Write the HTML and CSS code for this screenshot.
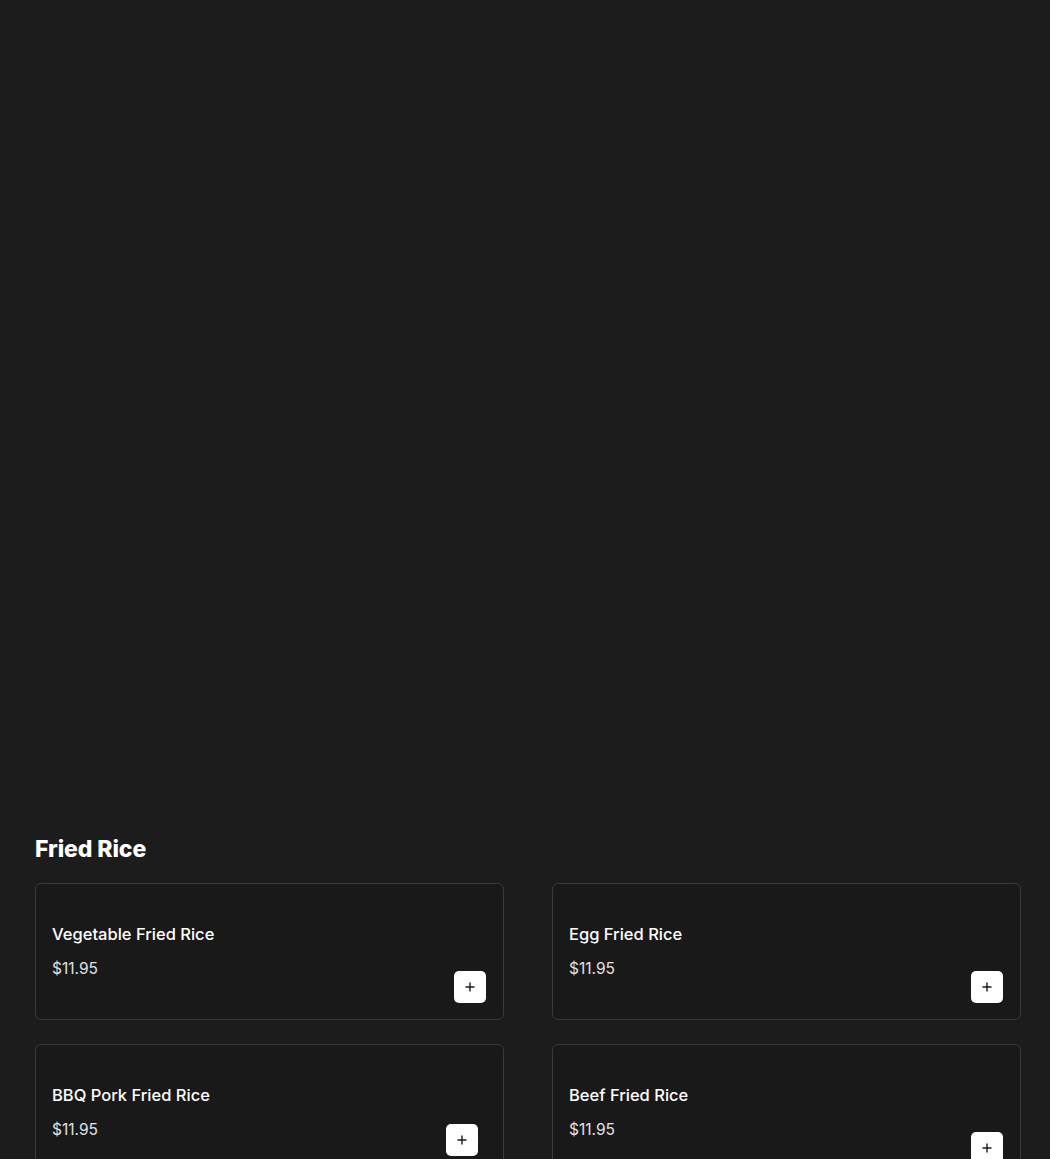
FILE: index.html
```html
<!DOCTYPE html>
<html lang="en">
<head>
    <meta name="viewport" content="width=device-width, initial-scale=1">
    <title>Menu - Fried Rice</title>
    <link rel="stylesheet" href="styles.css">
</head>
<body>

    <!-- Hero banner (image area) -->
    <div class="hero"></div>

    <section class="menu-section">
        <h2 class="section-title">Fried Rice</h2>

        <div class="menu-grid">
            <div class="item-card">
                <div class="item-info">
                    <div class="item-name">Vegetable Fried Rice</div>
                    <div class="item-price">$11.95</div>
                </div>
                <button class="add-btn" aria-label="Add">
                    <svg width="12" height="12" viewBox="0 0 12 12"><path d="M6 1.5v9M1.5 6h9" stroke="#1c1c1c" stroke-width="1.4" /></svg>
                </button>
            </div>

            <div class="item-card">
                <div class="item-info">
                    <div class="item-name">Egg Fried Rice</div>
                    <div class="item-price">$11.95</div>
                </div>
                <button class="add-btn" aria-label="Add">
                    <svg width="12" height="12" viewBox="0 0 12 12"><path d="M6 1.5v9M1.5 6h9" stroke="#1c1c1c" stroke-width="1.4" /></svg>
                </button>
            </div>

            <div class="item-card">
                <div class="item-info">
                    <div class="item-name">BBQ Pork Fried Rice</div>
                    <div class="item-price">$11.95</div>
                </div>
                <button class="add-btn add-btn-inset" aria-label="Add">
                    <svg width="12" height="12" viewBox="0 0 12 12"><path d="M6 1.5v9M1.5 6h9" stroke="#1c1c1c" stroke-width="1.4" /></svg>
                </button>
            </div>

            <div class="item-card">
                <div class="item-info">
                    <div class="item-name">Beef Fried Rice</div>
                    <div class="item-price">$11.95</div>
                </div>
                <button class="add-btn" aria-label="Add">
                    <svg width="12" height="12" viewBox="0 0 12 12"><path d="M6 1.5v9M1.5 6h9" stroke="#1c1c1c" stroke-width="1.4" /></svg>
                </button>
            </div>
        </div>
    </section>

</body>
</html>
```

FILE: styles.css
```css
/* General Styles */
body {
    font-family: "Inter", "Open Sans", sans-serif;
    margin: 0;
    padding: 0;
    background-color: #1c1c1c;
    color: #ffffff;
}

/* Hero */
.hero {
    height: 834px;
}

/* Section */
.menu-section {
    padding: 0 29px 40px 35px;
}

.section-title {
    margin: 0 0 19px 0;
    font-size: 23px;
    line-height: 30px;
    font-weight: 800;
    letter-spacing: -0.1px;
}

/* Grid */
.menu-grid {
    display: grid;
    grid-template-columns: 1fr 1fr;
    column-gap: 48px;
    row-gap: 24px;
}

/* Card */
.item-card {
    box-sizing: border-box;
    min-height: 137px;
    padding: 16px 17px 16px 16px;
    background-color: #191919;
    border: 1px solid #3a3a3a;
    border-radius: 6px;
    display: flex;
    justify-content: space-between;
    align-items: flex-end;
}

.item-info {
    align-self: flex-start;
    margin-top: 22px;
    display: flex;
    flex-direction: column;
    gap: 13px;
}

.item-name {
    font-size: 16.5px;
    line-height: 24px;
    font-weight: 500;
}

.item-price {
    font-size: 15.5px;
    line-height: 20px;
    font-weight: 400;
    color: #e2e2e2;
}

/* Add button */
.add-btn {
    width: 32px;
    height: 32px;
    padding: 0;
    border: none;
    border-radius: 5px;
    background-color: #ffffff;
    display: flex;
    align-items: center;
    justify-content: center;
    cursor: pointer;
}

.add-btn-inset { margin: 0 8px 8px 0; }
```
